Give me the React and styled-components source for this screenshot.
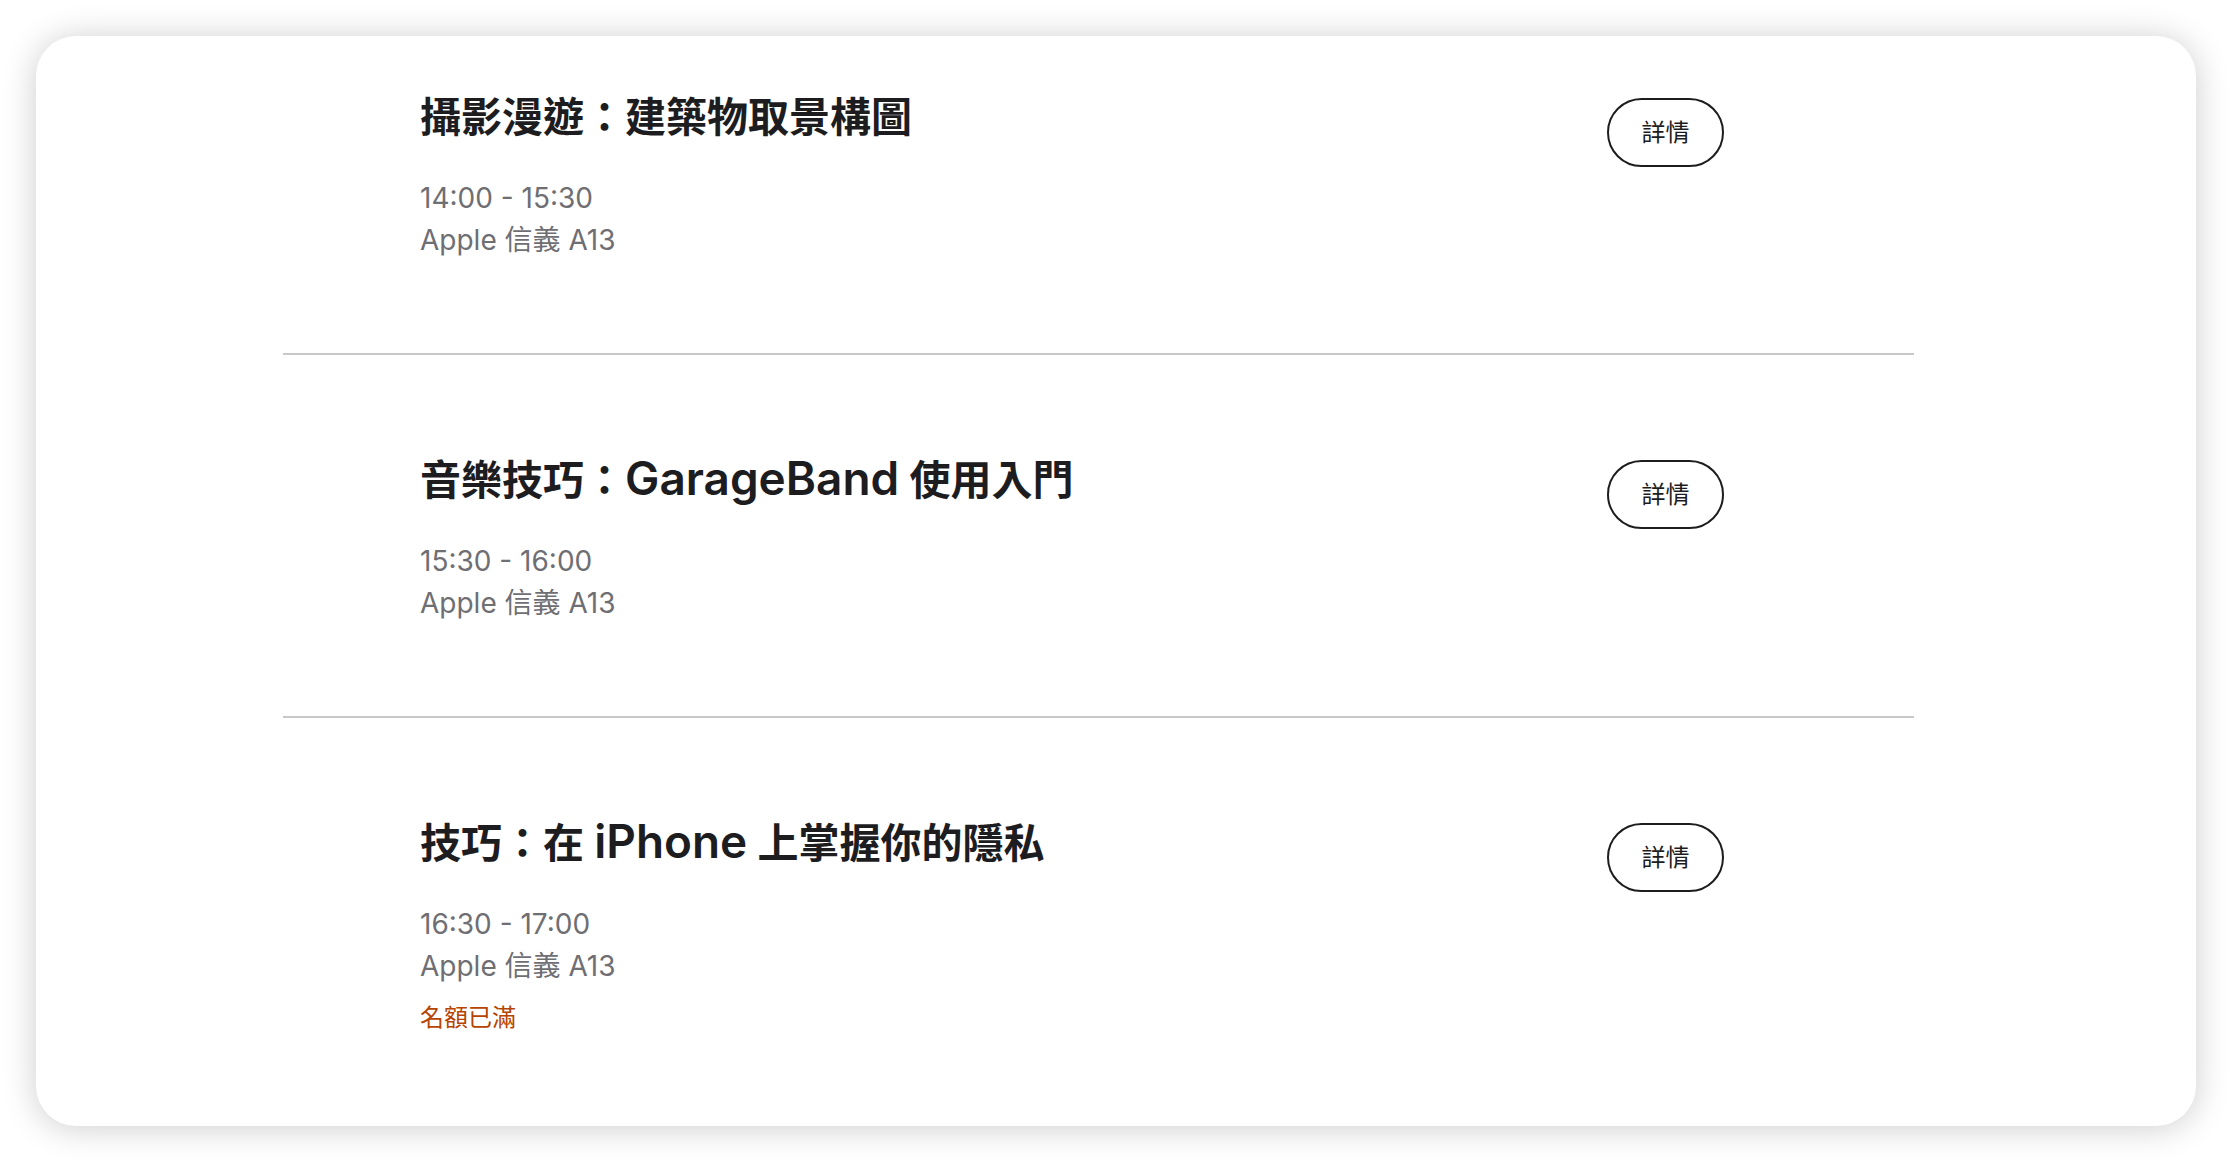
import React from "react";
import styled, { createGlobalStyle } from "styled-components";

const GlobalStyle = createGlobalStyle`
  html, body {
    margin: 0;
    padding: 0;
    background: #ffffff;
  }
  body {
    font-family: "Inter", "Noto Sans CJK TC", "Noto Sans", sans-serif;
    color: #1d1d1f;
    -webkit-font-smoothing: antialiased;
  }
`;

const sessions = [
  {
    title: "攝影漫遊：建築物取景構圖",
    time: "14:00 - 15:30",
    place: "Apple 信義 A13",
  },
  {
    title: "音樂技巧：GarageBand 使用入門",
    time: "15:30 - 16:00",
    place: "Apple 信義 A13",
  },
  {
    title: "技巧：在 iPhone 上掌握你的隱私",
    time: "16:30 - 17:00",
    place: "Apple 信義 A13",
    full: true,
  },
];

// latin words in the headline run a bit larger than the CJK glyphs
function renderTitle(text) {
  return text.split(/([A-Za-z]+)/).map((part, i) =>
    /^[A-Za-z]+$/.test(part) ? <Latin key={i}>{part}</Latin> : part
  );
}

export default function App() {
  return (
    <>
      <GlobalStyle />
      <Page>
        <Card>
          <SessionList>
            {sessions.map((s, i) => (
              <SessionRow key={i} first={i === 0} last={i === sessions.length - 1}>
                <Info>
                  <Title>{renderTitle(s.title)}</Title>
                  <Meta>{s.time}</Meta>
                  <Meta>{s.place}</Meta>
                  {s.full && <Status>名額已滿</Status>}
                </Info>
                <DetailButton type="button">詳情</DetailButton>
              </SessionRow>
            ))}
          </SessionList>
        </Card>
      </Page>
    </>
  );
}

const Page = styled.div`
  width: 2232px;
  height: 1162px;
  box-sizing: border-box;
  padding: 36px;
`;

const Card = styled.div`
  height: 1090px;
  box-sizing: border-box;
  background: #ffffff;
  border-radius: 40px;
  box-shadow: 0 2px 34px rgba(0, 0, 0, 0.2);
  padding: 0 282px 0 247px;
  overflow: hidden;
`;

const SessionList = styled.ul`
  list-style: none;
  margin: 0;
  padding: 0;
`;

const SessionRow = styled.li`
  display: flex;
  justify-content: space-between;
  align-items: flex-start;
  padding: ${(p) => (p.first ? "56px" : "99px")} 190px 92px 137px;
  border-bottom: ${(p) => (p.last ? "none" : "2px solid #c8c8c8")};
`;

const Info = styled.div`
  display: flex;
  flex-direction: column;
`;

const Title = styled.h2`
  margin: 0 0 35px;
  font-size: 41px;
  line-height: 50px;
  font-weight: 600;
  color: #1d1d1f;
`;

const Latin = styled.span`
  font-size: 1.12em;
  line-height: 50px;
`;

const Meta = styled.p`
  margin: 0;
  font-size: 28px;
  line-height: 42px;
  font-weight: 400;
  color: #6e6e73;
`;

const Status = styled.p`
  margin: 13px 0 0;
  font-size: 24px;
  line-height: 36px;
  color: #b64400;
`;

const DetailButton = styled.button`
  margin-top: 6px;
  width: 117px;
  height: 69px;
  box-sizing: border-box;
  border: 2px solid #1d1d1f;
  border-radius: 35px;
  background: #ffffff;
  color: #1d1d1f;
  font-family: "Inter", "Noto Sans CJK TC", sans-serif;
  font-size: 24px;
  line-height: 1;
  padding: 0;
  cursor: pointer;
`;
